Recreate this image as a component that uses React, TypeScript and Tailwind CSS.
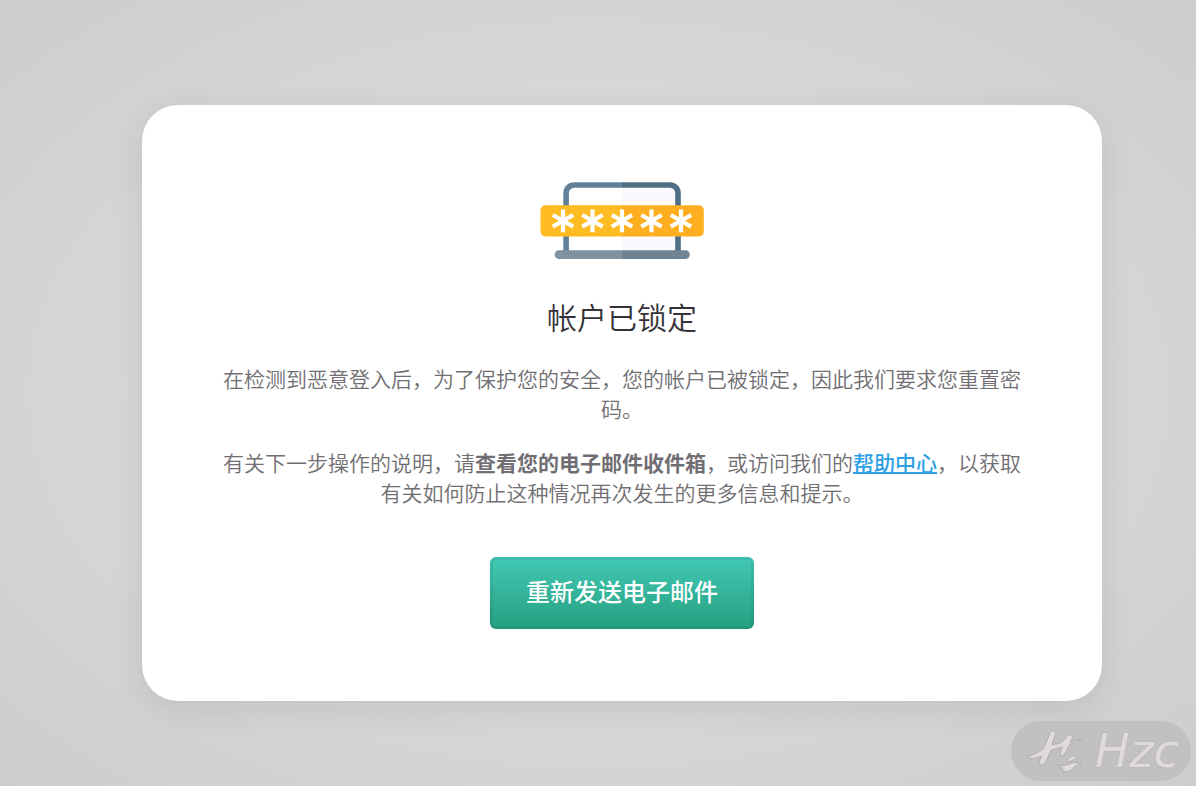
const STARS = [23, 52.5, 82, 111.5, 141]

function LockedDeviceIcon() {
  return (
    <svg viewBox="0 0 164 84" className="w-[164px] h-[84px]" fill="none" aria-hidden="true">
      {/* Screen */}
      <path d="M26 74V15a7.2 7.2 0 0 1 7.2-7.2H82V74z" fill="#ffffff" />
      <path d="M82 7.8h49a7.2 7.2 0 0 1 7.2 7.2v59H82z" fill="#fbf9fd" />
      <path d="M26.1 74V16a8 8 0 0 1 8-8H82" stroke="#61819a" strokeWidth="5.6" />
      <path d="M82 8h48a8 8 0 0 1 8 8v58" stroke="#4f6f87" strokeWidth="5.6" />

      {/* Base */}
      <path d="M82 73.2H19a4.4 4.4 0 0 0 0 8.8h63z" fill="#80919f" />
      <path d="M82 73.2h63.4a4.4 4.4 0 0 1 0 8.8H82z" fill="#6f8392" />

      {/* Password bar */}
      <path d="M82 28.2H5.5a5 5 0 0 0-5 5v21.3a5 5 0 0 0 5 5H82z" fill="#ffbb22" />
      <path d="M82 28.2h76.800a5 5 0 0 1 5 5v21.300a5 5 0 0 1-5 5H82z" fill="#ffae1f" />
      {STARS.map((x) => (
        <path
          key={x}
          d={`M${x} 32.4v22.8M${x - 10.2} 38l20.4 11.6M${x - 10.2} 49.6l20.4-11.6`}
          stroke="#ffffff"
          strokeWidth="4.2"
        />
      ))}
    </svg>
  )
}

function BrandMark() {
  return (
    <svg viewBox="82 54 168 138" className="w-14 h-[46px]" aria-hidden="true">
      <g fill="#dedbda" stroke="#b0adb1" strokeWidth="3" strokeLinejoin="round">
        <path d="M151 68c4-8 17-6 17 2-1 9-7 19-11 35 10-2 20-5 29-8 8-9 14-17 20-22 6-2 14 0 13 8l-7 13c10-5 22-8 34-8-12 4-24 9-35 14-7 12-11 25-19 33-6 4-12 3-11-3 0-6 4-13 7-21-11 3-24 6-34 10-6 13-11 27-18 38-4 6-16 6-18 0 1-8 5-14 7-20-13 3-27 10-39 5-2-5 14-8 43-25 9-16 16-35 22-51z" />
        <path d="M203 149c6-8 18-14 26-11 3 8-6 11-19 16-7 2-11 0-7-5z" />
        <path d="M174 165c13 3 24 1 37-4 11-5 23-3 35-4-10 6-17 7-24 15-8 11-22 17-32 10l-4-9c-4-1-9-3-12-8z" />
      </g>
    </svg>
  )
}

export default function App() {
  return (
    <div className="min-h-screen flex items-center justify-center pt-5 pl-12 bg-[radial-gradient(ellipse_at_center,#e0dee1_0%,#d9d7da_50%,#cecccf_100%)] font-['Liberation_Sans','Noto_Sans_CJK_SC',sans-serif]">
      <main className="w-full max-w-[960px] flex flex-col items-center px-20 py-18 rounded-[36px] bg-white text-center shadow-[0_8px_32px_rgba(0,0,0,0.09)]">
        <LockedDeviceIcon />

        <h1 className="mt-10 text-[30px] leading-9 font-[350] text-[#353337]">帐户已锁定</h1>

        <div className="mt-7 flex flex-col gap-6 text-[21px] leading-[30px] font-[350] text-[#706e72]">
          <p>在检测到恶意登入后，为了保护您的安全，您的帐户已被锁定，因此我们要求您重置密码。</p>
          <p>
            有关下一步操作的说明，请<strong className="font-bold">查看您的电子邮件收件箱</strong>，或访问我们的
            <a href="#help" className="font-medium text-[#2c9fe5] underline decoration-2">帮助中心</a>
            ，以获取有关如何防止这种情况再次发生的更多信息和提示。
          </p>
        </div>

        <button
          type="button"
          className="mt-12 h-18 px-9 rounded-md bg-linear-to-b from-[#42c8b5] to-[#25a080] text-2xl font-medium text-white shadow-[inset_0_0_0_3px_rgba(0,0,0,0.06)] cursor-pointer"
        >
          重新发送电子邮件
        </button>
      </main>

      <div className="fixed right-[5px] bottom-[5px] h-[60px] pl-4 pr-3 flex items-center gap-3 rounded-full bg-[#c2c0c3]">
        <BrandMark />
        <span className="font-['DejaVu_Sans',sans-serif] text-[46px] leading-none italic text-[#dedbda] [-webkit-text-stroke:1px_#b8b5b9] [paint-order:stroke_fill]">
          Hzc
        </span>
      </div>
    </div>
  )
}
